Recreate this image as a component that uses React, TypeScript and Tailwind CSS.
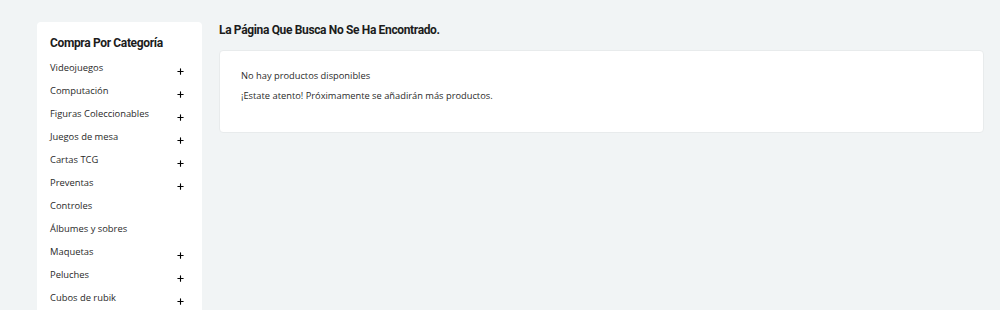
import { Plus } from "lucide-react";

const categories = [
  { name: "Videojuegos", sub: true },
  { name: "Computación", sub: true },
  { name: "Figuras Coleccionables", sub: true },
  { name: "Juegos de mesa", sub: true },
  { name: "Cartas TCG", sub: true },
  { name: "Preventas", sub: true },
  { name: "Controles", sub: false },
  { name: "Álbumes y sobres", sub: false },
  { name: "Maquetas", sub: true },
  { name: "Peluches", sub: true },
  { name: "Cubos de rubik", sub: true },
];

export default function App() {
  return (
    <div className="flex h-[310px] gap-[17px] overflow-hidden bg-[#f1f4f5] pl-[37px] pr-[16px] pt-[22px] font-['Open_Sans',sans-serif] text-[#2a2a2a]">
      <aside className="w-[165px] shrink-0 rounded-t-[4px] bg-white px-[13px] pt-[13px]">
        <h2 className="mb-[6px] font-['Roboto',sans-serif] text-[12px] font-bold leading-[16px] tracking-[-0.35px] text-[#1c1c1c]">
          Compra Por Categoría
        </h2>
        <ul>
          {categories.map((c) => (
            <li key={c.name} className="flex h-[23px] items-center justify-between pr-[4px] text-[9.4px]">
              <span className="pb-[1px]">{c.name}</span>
              {c.sub && <Plus className="mt-[5px] h-[9px] w-[9px] text-black" strokeWidth={3} />}
            </li>
          ))}
        </ul>
      </aside>
      <main className="flex-1">
        <h1 className="font-['Roboto',sans-serif] text-[12px] font-bold leading-[16px] tracking-[-0.35px] text-[#1c1c1c]">
          La Página Que Busca No Se Ha Encontrado.
        </h1>
        <div className="mt-[12px] rounded-[4px] border border-[#e8ebec] bg-white px-[21px] pb-[29px] pt-[18px] text-[9.3px]">
          <p className="leading-[14px]">No hay productos disponibles</p>
          <p className="mt-[6px] leading-[14px]">¡Estate atento! Próximamente se añadirán más productos.</p>
        </div>
      </main>
    </div>
  );
}
